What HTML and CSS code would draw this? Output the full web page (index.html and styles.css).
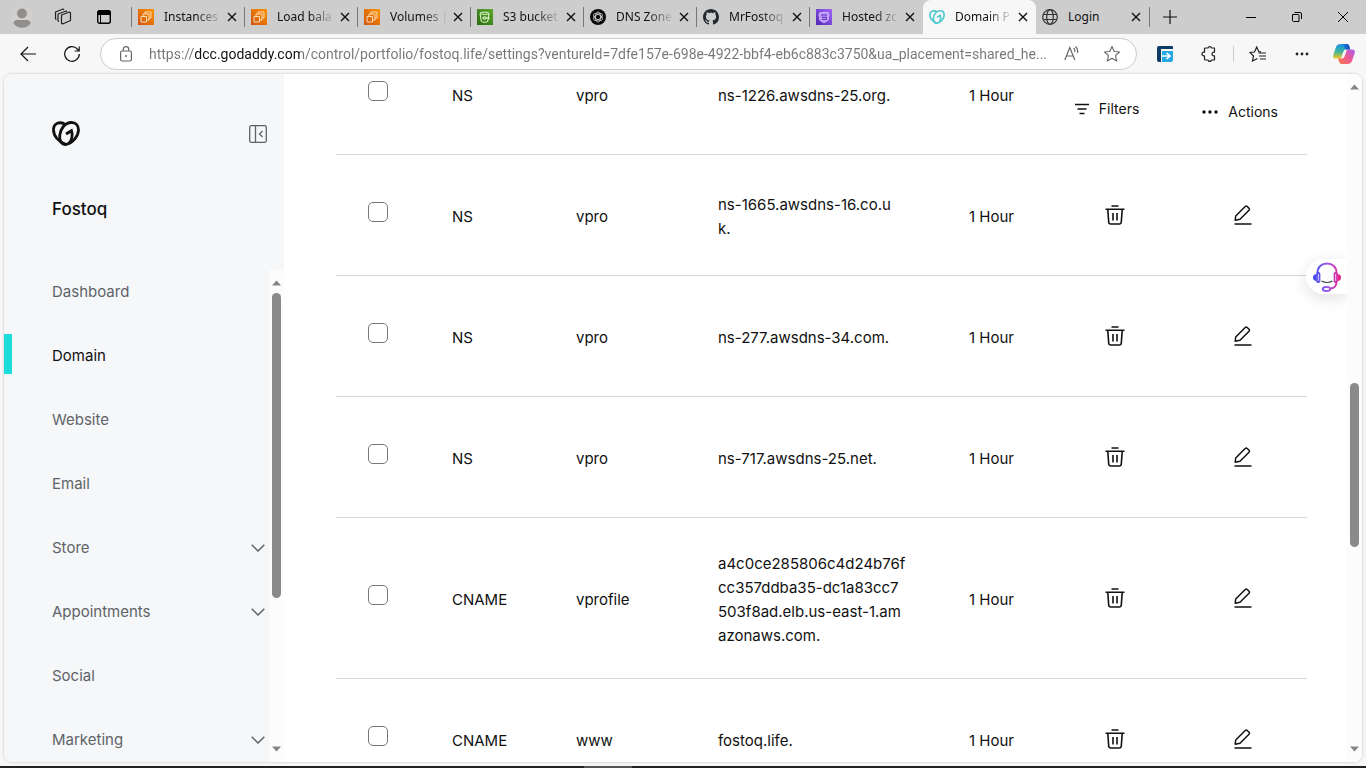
FILE: index.html
```html
<!DOCTYPE html>
<html lang="en">
<head>
<meta charset="utf-8">
<title>Domain Portfolio</title>
<link rel="stylesheet" href="styles.css">
</head>
<body>
<svg class="defs" aria-hidden="true">
  <defs>
    <linearGradient id="orange" x1="0" y1="1" x2="1" y2="0"><stop offset="0" stop-color="#cf5411"/><stop offset="1" stop-color="#fb9200"/></linearGradient>
    <linearGradient id="green" x1="0" y1="1" x2="1" y2="0"><stop offset="0" stop-color="#2a6a13"/><stop offset="1" stop-color="#5fa82c"/></linearGradient>
    <linearGradient id="purple" x1="0" y1="1" x2="1" y2="0"><stop offset="0" stop-color="#5029b5"/><stop offset="1" stop-color="#a264fa"/></linearGradient>
    <linearGradient id="headset" gradientUnits="userSpaceOnUse" x1="2" y1="0" x2="28" y2="0"><stop offset="0" stop-color="#3f4cf0"/><stop offset=".5" stop-color="#9a5cf0"/><stop offset="1" stop-color="#e8208a"/></linearGradient>
    <linearGradient id="cp1" x1="0" y1="0" x2="0" y2="1"><stop offset="0" stop-color="#1a8fe8"/><stop offset=".5" stop-color="#35b5a0"/><stop offset="1" stop-color="#f5c522"/></linearGradient>
    <linearGradient id="cp2" x1="1" y1="0" x2="0" y2="1"><stop offset="0" stop-color="#a85cf0"/><stop offset=".5" stop-color="#ee5a90"/><stop offset="1" stop-color="#fb7a42"/></linearGradient>
    <linearGradient id="cp3" x1="0" y1="0" x2="1" y2="0"><stop offset="0" stop-color="#1e7fe6"/><stop offset="1" stop-color="#1646b8"/></linearGradient>
  </defs>
  <symbol id="i-close" viewBox="0 0 10 10"><path d="M1 1l8 8M9 1l-8 8" fill="none" stroke="currentColor" stroke-width="1.4"/></symbol>
  <symbol id="i-ec2" viewBox="0 0 16 16"><rect width="16" height="16" fill="url(#orange)"/><path d="M7 5V3h6v6h-2M5 7V5h6v6H9M3 7.500h5.500V13H3z" fill="none" stroke="#ffe6c8" stroke-width=".9" stroke-linejoin="round"/></symbol>
  <symbol id="i-s3" viewBox="0 0 16 16"><rect width="16" height="16" fill="url(#green)"/><path d="M3 4.500l1.300 8c1.500 1 5 1 6.400 0L12 4.500M3 4.300c1-1.500 8-1.500 9 0-1 1.400-8 1.400-9 0zM6 8h3v2H6zM9 8.500l4 1" fill="none" stroke="#e6ffd2" stroke-width="1"/></symbol>
  <symbol id="i-gpt" viewBox="0 0 16 16"><circle cx="8" cy="8" r="8" fill="#0a0a0a"/><g fill="none" stroke="#ddd" stroke-width=".8"><ellipse cx="8" cy="8" rx="2.500" ry="5"/><ellipse cx="8" cy="8" rx="2.500" ry="5" transform="rotate(60 8 8)"/><ellipse cx="8" cy="8" rx="2.500" ry="5" transform="rotate(120 8 8)"/></g></symbol>
  <symbol id="i-github" viewBox="0 0 16 16"><path fill="#24292f" d="M8 0C3.580 0 0 3.580 0 8c0 3.540 2.290 6.530 5.470 7.590.4.070.55-.17.55-.38 0-.19-.01-.82-.01-1.490-2.010.37-2.530-.49-2.690-.94-.09-.23-.48-.94-.82-1.130-.28-.15-.68-.52-.01-.53.63-.01 1.080.58 1.230.82.72 1.210 1.870.87 2.330.66.07-.52.28-.87.51-1.070-1.780-.2-3.640-.89-3.640-3.950 0-.87.31-1.590.82-2.150-.08-.2-.36-1.020.08-2.120 0 0 .67-.21 2.200.82.64-.18 1.320-.27 2-.27s1.360.09 2 .27c1.530-1.040 2.200-.82 2.200-.82.44 1.100.16 1.920.08 2.120.51.56.82 1.270.82 2.150 0 3.070-1.870 3.750-3.650 3.950.29.25.54.73.54 1.480 0 1.070-.01 1.930-.01 2.200 0 .21.15.46.55.38A8.010 8.010 0 0 0 16 8c0-4.420-3.580-8-8-8z"/></symbol>
  <symbol id="i-route" viewBox="0 0 16 16"><rect width="16" height="16" fill="url(#purple)"/><path d="M4 3.500l2 .5 2-1 2 1 2-.5 1 2.500-.8 2 .3 2.500-2 2L8 13.500 5.500 12.500l-2-2L3.800 8 3 6z" fill="#b992fb" stroke="#dcc8ff" stroke-width=".9"/><path d="M5 6h6M6 8.300h4.500v2H6" fill="none" stroke="#6232c0" stroke-width="1"/></symbol>
  <symbol id="i-gd" viewBox="0 0 28 25"><g fill="none" stroke="currentColor" stroke-width="2.800"><path d="M14 23.500C6.500 21 1.300 14.500 1.500 8.500 1.700 2.500 7.500-.5 14 3.800"/><path d="M14 23.500c-4.500 0-6.700-4-6.300-9C8.200 8.500 12.500 1.500 19.500 1.500c4.500 0 7 3.300 7 7.300 0 6.200-5.500 13.200-12.500 14.700z"/><path d="M14 13l5.500-3.300c1.200 3.500.8 9.500-2.500 12.500"/></g></symbol>
  <symbol id="i-globe" viewBox="0 0 16 16"><g fill="none" stroke="#333" stroke-width="1.200"><circle cx="8" cy="8" r="7.300"/><ellipse cx="8" cy="8" rx="3.300" ry="7.300"/><path d="M1.500 5.500h13M1.500 10.500h13"/></g></symbol>
  <symbol id="i-trash" viewBox="0 0 20 20"><path d="M6.500 1h7M.5 4.200h19M2.800 4.500l.9 12.500q.2 2 2 2h8.600q1.800 0 2-2l.9-12.500M8 8v7.500M12 8v7.500" fill="none" stroke="currentColor" stroke-width="1.600"/></symbol>
  <symbol id="i-edit" viewBox="0 0 20 20"><path d="M2.200 15.200l.5-4.200L12.200 1.500q1-.8 2 0l1.800 1.800q.9 1 0 2L7 14.200zM1.500 19h17" fill="none" stroke="currentColor" stroke-width="1.500" stroke-linejoin="round"/></symbol>
  <symbol id="i-down" viewBox="0 0 14 8"><path d="M.7.700L7 7 13.300.7" fill="none" stroke="currentColor" stroke-width="1.500"/></symbol>
  <symbol id="i-arrow" viewBox="0 0 9 6"><path d="M0 5.500L4.500.500 9 5.500z" fill="#858585"/></symbol>
  <symbol id="i-star" viewBox="0 0 18 18"><path d="M9 1.500l2.200 5 5.300.500-4 3.600 1.200 5.400L9 13.200 4.300 16l1.200-5.400-4-3.600 5.300-.5z" fill="none" stroke="currentColor" stroke-width="1.100" stroke-linejoin="round"/></symbol>
</svg>

<header class="tabstrip">
  <div class="strip-tools">
    <button class="avatar" aria-label="Profile"><svg width="22" height="22" viewBox="0 0 22 22"><circle cx="11" cy="11" r="10.500" fill="#d2d0ce"/><circle cx="11" cy="7.500" r="5" fill="#918f8d"/><path d="M2.500 17.500q0-3.500 3.500-3.500h10q3.500 0 3.500 3.500a10.500 10.500 0 0 1-17 0z" fill="#918f8d"/></svg></button>
    <button aria-label="Workspaces"><svg width="18" height="18" viewBox="0 0 18 18"><g fill="none" stroke="#222" stroke-width="1.200" stroke-linejoin="round"><path d="M7.500 7l8-3 1 1v7.500l-8 3.500-1-1zM5 13.500l-1-.5V6l8-3 1 .8M2.500 11.500l-1-.5V4l7.500-3 1 .7"/></g></svg></button>
    <button aria-label="Tab actions"><svg width="14" height="14" viewBox="0 0 14 14"><rect x=".7" y=".7" width="12.600" height="12.600" rx="2" fill="none" stroke="#000" stroke-width="1.400"/><path d="M1 1h12v3.500H1zM3.500 4v9" stroke="#000" fill="#000"/></svg></button>
  </div>
  <nav class="tabs" aria-label="Tabs">
    <div class="tab"><svg class="fav"><use href="#i-ec2"/></svg><span class="title">Instances</span><button aria-label="Close tab"><svg class="x"><use href="#i-close"/></svg></button></div>
    <div class="tab"><svg class="fav"><use href="#i-ec2"/></svg><span class="title">Load bala</span><button aria-label="Close tab"><svg class="x"><use href="#i-close"/></svg></button></div>
    <div class="tab"><svg class="fav"><use href="#i-ec2"/></svg><span class="title">Volumes |</span><button aria-label="Close tab"><svg class="x"><use href="#i-close"/></svg></button></div>
    <div class="tab"><svg class="fav"><use href="#i-s3"/></svg><span class="title">S3 bucket</span><button aria-label="Close tab"><svg class="x"><use href="#i-close"/></svg></button></div>
    <div class="tab"><svg class="fav"><use href="#i-gpt"/></svg><span class="title">DNS Zone</span><button aria-label="Close tab"><svg class="x"><use href="#i-close"/></svg></button></div>
    <div class="tab"><svg class="fav"><use href="#i-github"/></svg><span class="title">MrFostoq</span><button aria-label="Close tab"><svg class="x"><use href="#i-close"/></svg></button></div>
    <div class="tab"><svg class="fav"><use href="#i-route"/></svg><span class="title">Hosted zc</span><button aria-label="Close tab"><svg class="x"><use href="#i-close"/></svg></button></div>
    <div class="tab active"><svg class="fav teal"><use href="#i-gd"/></svg><span class="title">Domain P</span><button aria-label="Close tab"><svg class="x"><use href="#i-close"/></svg></button></div>
    <div class="tab after"><svg class="fav"><use href="#i-globe"/></svg><span class="title">Login</span><button aria-label="Close tab"><svg class="x"><use href="#i-close"/></svg></button></div>
    <button class="newtab" aria-label="New tab"><svg width="14" height="14" viewBox="0 0 14 14"><path d="M7 0v14M0 7h14" stroke="#111" stroke-width="1.200"/></svg></button>
  </nav>
  <div class="window">
    <button aria-label="Minimize"><svg width="10" height="10"><path d="M0 5.500h10" stroke="#000"/></svg></button>
    <button aria-label="Restore"><svg width="10" height="10" viewBox="0 0 10 10"><path d="M.5 2.500h5.500q1 0 1 1v6H1.500q-1 0-1-1zM2.500.5H8q1.500 0 1.500 1.500v5" fill="none" stroke="#000"/></svg></button>
    <button aria-label="Close"><svg width="10" height="10"><path d="M0 0l10 10M10 0L0 10" stroke="#000"/></svg></button>
  </div>
</header>

<div class="toolbar">
  <button class="tool" aria-label="Back"><svg width="16" height="16" viewBox="0 0 16 16"><path d="M16 8H1M8 1L1 8l7 7" fill="none" stroke="#111" stroke-width="1.200"/></svg></button>
  <button class="tool" aria-label="Refresh"><svg width="16" height="16" viewBox="0 0 16 16"><path d="M15.300 8A7.300 7.300 0 1 1 13.500 3.200L15 5M15.200.5V5h-4.500" fill="none" stroke="#111" stroke-width="1.200"/></svg></button>
  <div class="address">
    <svg width="12" height="16" viewBox="0 0 12 16"><path d="M.6 6.500q0-1.500 1.500-1.500h7.800q1.500 0 1.500 1.500v7q0 1.500-1.500 1.500H2.100Q.6 15 .6 13.500zM3.200 5V3.500a2.800 2.800 0 0 1 5.600 0V5" fill="none" stroke="#666" stroke-width="1.200"/><circle cx="6" cy="10" r="1" fill="#666"/></svg>
    <input class="url" type="text" aria-label="Address" value="https://dcc.godaddy.com/control/portfolio/fostoq.life/settings?ventureId=7dfe157e-698e-4922-bbf4-eb6c883c3750&amp;ua_placement=shared_he...">
    <button class="tool" aria-label="Read aloud"><svg width="16" height="16" viewBox="0 0 16 16"><path d="M.8 14L5.800 1.500 10.800 14M2.500 10h6.600M9.500 2q1.800 1.500 1.200 4M11.500.5q3 2.500 2 6.500" fill="none" stroke="#666" stroke-width="1.200"/></svg></button>
    <button class="tool gray" aria-label="Favorite"><svg width="18" height="18"><use href="#i-star"/></svg></button>
  </div>
  <button class="tool" aria-label="Extension"><svg width="16" height="16" viewBox="0 0 16 16"><path d="M2 0h13q1 0 1 1v2H4v13H2q-2 0-2-2V2q0-2 2-2z" fill="#0d3b66"/><path d="M5 5h11v9q0 2-2 2H5z" fill="#27a9e6"/><path d="M5 10h7M9.500 7l3.500 3-3.500 3" fill="none" stroke="#fff" stroke-width="1.600"/></svg></button>
  <button class="tool" aria-label="Extensions"><svg width="16" height="16" viewBox="0 0 16 16"><path d="M5 2h2a1.800 1.800 0 0 1 3.500 0h3v4.200a1.900 1.900 0 1 0 0 3.600V14h-3a1.800 1.800 0 0 1-3.500 0H4.500q-1 0-1-1V9.800a1.900 1.900 0 1 1 0-3.600V3q0-1 1-1z" fill="none" stroke="#222" stroke-width="1.200" stroke-linejoin="round"/></svg></button>
  <span class="divider"></span>
  <button class="tool" aria-label="Favorites"><svg width="18" height="16" viewBox="0 0 18 16"><path d="M8.500 12.500L3.500 15l1-5L1 6.500 5.500 6l2.200-5 2 4.500 2.300.5M9.500 7H17M10 10h7M11 13h6" fill="none" stroke="#222" stroke-width="1.200"/></svg></button>
  <button class="tool" aria-label="Settings and more"><svg width="14" height="4"><g fill="#222"><circle cx="2" cy="2" r="1.400"/><circle cx="7" cy="2" r="1.400"/><circle cx="12" cy="2" r="1.400"/></g></svg></button>
  <button class="tool copilot" aria-label="Copilot"><svg width="22" height="20" viewBox="0 0 22 20"><path d="M8 0h6q1.500 0 2.200 2l1 3.500H13q-2 0-2.700 2.200L8 14.500H3Q-.5 14.500.3 11L3 3q1-3 5-3z" fill="url(#cp1)"/><path d="M10 0h4q1.500 0 2.200 2l1 3.500H13q-1.500-1-3-5.500z" fill="url(#cp3)"/><path d="M14 20H8.500Q7 20 6.200 18L5 14.500h4q2 0 2.700-2.200L14 5.500h5q3.500 0 2.700 3.500L19 17q-1 3-5 3z" fill="url(#cp2)"/></svg></button>
</div>

<div class="frame">
  <aside class="sidebar">
    <div class="brand">
      <svg class="logo" width="28" height="25"><use href="#i-gd"/></svg>
      <button aria-label="Collapse menu"><svg width="18" height="18" viewBox="0 0 18 18"><g fill="none" stroke="#5c6068" stroke-width="1.300"><rect x=".7" y=".7" width="16.600" height="16.600" rx="1.500"/><path d="M6.500 1v16M13.500 6l-3 3 3 3"/></g></svg></button>
    </div>
    <h1 class="venture">Fostoq</h1>
    <div class="menu-pane">
      <nav class="menu" aria-label="Main">
        <a href="#">Dashboard</a>
        <a href="#" class="current">Domain</a>
        <a href="#">Website</a>
        <a href="#">Email</a>
        <a href="#">Store<svg class="chev"><use href="#i-down"/></svg></a>
        <a href="#">Appointments<svg class="chev"><use href="#i-down"/></svg></a>
        <a href="#">Social</a>
        <a href="#">Marketing<svg class="chev"><use href="#i-down"/></svg></a>
      </nav>
      <div class="scroll menu-scroll"><svg class="arrow"><use href="#i-arrow"/></svg><div class="track"><span class="thumb"></span></div><svg class="arrow flip"><use href="#i-arrow"/></svg></div>
    </div>
  </aside>
  <main class="content">
    <table class="records">
      <colgroup><col class="c-check"><col class="c-type"><col class="c-name"><col class="c-data"><col class="c-ttl"><col class="c-act"><col class="c-act"></colgroup>
      <tbody>
        <tr><td><input type="checkbox" aria-label="Select ns-1226"></td><td>NS</td><td>vpro</td><td>ns-1226.awsdns-25.org.</td><td>1 Hour</td><td></td><td></td></tr>
        <tr><td><input type="checkbox" aria-label="Select ns-1665"></td><td>NS</td><td>vpro</td><td>ns-1665.awsdns-16.co.u<br>k.</td><td>1 Hour</td><td class="act"><button aria-label="Delete"><svg><use href="#i-trash"/></svg></button></td><td class="act"><button aria-label="Edit"><svg><use href="#i-edit"/></svg></button></td></tr>
        <tr><td><input type="checkbox" aria-label="Select ns-277"></td><td>NS</td><td>vpro</td><td>ns-277.awsdns-34.com.</td><td>1 Hour</td><td class="act"><button aria-label="Delete"><svg><use href="#i-trash"/></svg></button></td><td class="act"><button aria-label="Edit"><svg><use href="#i-edit"/></svg></button></td></tr>
        <tr><td><input type="checkbox" aria-label="Select ns-717"></td><td>NS</td><td>vpro</td><td>ns-717.awsdns-25.net.</td><td>1 Hour</td><td class="act"><button aria-label="Delete"><svg><use href="#i-trash"/></svg></button></td><td class="act"><button aria-label="Edit"><svg><use href="#i-edit"/></svg></button></td></tr>
        <tr><td><input type="checkbox" aria-label="Select vprofile"></td><td>CNAME</td><td>vprofile</td><td>a4c0ce285806c4d24b76f<br>cc357ddba35-dc1a83cc7<br>503f8ad.elb.us-east-1.am<br>azonaws.com.</td><td>1 Hour</td><td class="act"><button aria-label="Delete"><svg><use href="#i-trash"/></svg></button></td><td class="act"><button aria-label="Edit"><svg><use href="#i-edit"/></svg></button></td></tr>
        <tr><td><input type="checkbox" aria-label="Select www"></td><td>CNAME</td><td>www</td><td>fostoq.life.</td><td>1 Hour</td><td class="act"><button aria-label="Delete"><svg><use href="#i-trash"/></svg></button></td><td class="act"><button aria-label="Edit"><svg><use href="#i-edit"/></svg></button></td></tr>
      </tbody>
    </table>
    <div class="table-tools">
      <button class="filters"><svg width="14" height="12" viewBox="0 0 14 12"><path d="M0 1.500h14M2.500 6h9M4.500 10.500h5" stroke="#111" stroke-width="1.400"/></svg>Filters</button>
      <button class="actions"><svg width="16" height="4"><g fill="#111"><circle cx="2" cy="2" r="1.700"/><circle cx="8" cy="2" r="1.700"/><circle cx="14" cy="2" r="1.700"/></g></svg>Actions</button>
    </div>
    <button class="help" aria-label="Help"><svg width="30" height="32" viewBox="0 0 30 32"><g fill="none" stroke="url(#headset)" stroke-width="1.800"><path d="M5.500 12C5.500 6 9.500 2.500 15 2.500S24.500 6 24.500 12M24.500 21c0 4-1.500 6-6 6.500"/><ellipse cx="14.500" cy="28" rx="3.800" ry="2"/><rect x="5" y="12" width="2.500" height="9" rx="1"/><rect x="22.500" y="12" width="2.500" height="9" rx="1"/></g><path d="M4 13v7q-3-.5-3-3.500t3-3.500z" fill="#4a4cf0"/><path d="M26 13v7q3-.5 3-3.500t-3-3.500z" fill="#e8208a"/><path d="M9.500 20q5.500 3 11 0" fill="none" stroke="#444" stroke-width="1.200"/></svg></button>
  </main>
  <div class="scroll page-scroll"><svg class="arrow"><use href="#i-arrow"/></svg><div class="track"><span class="thumb"></span></div><svg class="arrow flip"><use href="#i-arrow"/></svg></div>
</div>
<footer class="taskbar"><span></span></footer>
</body>
</html>
```
FILE: styles.css
```css
* { box-sizing: border-box; }
body {
  margin: 0;
  height: 100vh;
  display: flex;
  flex-direction: column;
  overflow: hidden;
  background: #f7f7f7;
  color: #111;
  font: 15px/24px Inter, "Liberation Sans", sans-serif;
}
button { border: 0; padding: 0; margin: 0; background: none; color: inherit; font: inherit; display: flex; align-items: center; justify-content: center; }
svg { display: block; flex: none; }
.defs { position: absolute; width: 0; height: 0; }

/* tab strip */
.tabstrip { flex: none; height: 34px; display: flex; background: #cdcdcd; font: 12px/16px "Noto Sans", sans-serif; }
.strip-tools { flex: none; width: 132px; display: flex; align-items: center; padding-left: 1px; }
.strip-tools button { width: 41px; }
.tabs { flex: 1; min-width: 0; display: flex; }
.tab { flex: 0 1 113px; min-width: 0; display: flex; align-items: center; padding: 0 5px 0 6px; position: relative; }
.tab::before { content: ""; position: absolute; left: -1px; top: 7px; width: 1px; height: 20px; background: #777; }
.fav { width: 16px; height: 16px; }
.teal { color: #4cc8ce; }
.title { flex: 1; min-width: 0; margin-left: 10px; overflow: hidden; white-space: nowrap; mask-image: linear-gradient(90deg, #000 32px, transparent 58px); }
.after .title { mask-image: none; }
.tab button { width: 16px; height: 16px; margin-left: 2px; }
.x { width: 10px; height: 10px; }
.active { background: #f7f7f7; border-radius: 8px 8px 0 0; }
.active::before, .after::before { display: none; }
.newtab { width: 42px; background: linear-gradient(#777, #777) 0 7px / 1px 20px no-repeat; }
.window { flex: none; display: flex; }
.window button { width: 46px; }

/* toolbar */
.toolbar { flex: none; height: 40px; display: flex; align-items: center; padding: 0 8px 0 6px; }
.tool { width: 44px; height: 32px; flex: none; }
.address { flex: 1; min-width: 0; height: 32px; margin: 0 6px; display: flex; align-items: center; padding: 0 4px 0 19px; border: 1px solid #ccc; border-radius: 16px; background: #fff; }
.url {
  flex: 1; min-width: 0; margin-left: 17px; padding: 0; border: 0; outline: 0; height: 24px;
  font: 14px/24px Roboto, "Noto Sans", sans-serif;
  color: transparent;
  background: linear-gradient(90deg, #767676 46px, #111 46px, #111 151px, #767676 151px);
  background-clip: text;
  -webkit-background-clip: text;
}
.address .tool { width: 40px; }
.gray { color: #666; }
.divider { width: 1px; height: 16px; background: #ccc; margin: 0 2px; }
.copilot { width: 34px; margin: 0 -3px 0 3px; }

/* page frame */
.frame { flex: 1; min-height: 0; margin: 0 4px 4px; display: flex; background: #fff; border-radius: 8px; overflow: hidden; box-shadow: 0 0 2px 1px #ddd; }
.sidebar { flex: none; width: 280px; display: flex; flex-direction: column; background: #f5f7f9; }
.brand { display: flex; align-items: center; justify-content: space-between; padding: 47px 17px 0 48px; }
.venture { margin: 50px 48px 49px; font-size: 17px; line-height: 26px; font-weight: 500; }
.brand + .venture { margin-bottom: 48px; }
.menu-pane { flex: 1; min-height: 0; display: flex; }
.menu { flex: 1; display: flex; flex-direction: column; gap: 24px; overflow: hidden; }
.menu a { flex: none; height: 40px; display: flex; align-items: center; justify-content: space-between; padding: 4px 4px 0 48px; color: #5f6368; text-decoration: none; }
.menu .current { color: #111; border-left: 8px solid #1bdbdb; padding-left: 40px; }
.chev { width: 14px; height: 8px; }

/* scroll bars */
.scroll { flex: none; width: 15px; display: flex; flex-direction: column; align-items: center; padding: 10px 0; background: #fcfcfc; }
.arrow { width: 9px; height: 6px; }
.flip { transform: rotate(180deg); }
.track { flex: 1; display: flex; flex-direction: column; margin: 7px 0; }
.track::before, .track::after { content: ""; flex: 290; }
.track .thumb { flex: 166; width: 9px; border-radius: 5px; background: #8a8a8a; }
.track::after { flex-grow: 194; }
.menu-scroll .track::before { flex-grow: 0; }
.menu-scroll .track .thumb { flex-grow: 307; }
.menu-scroll .track::after { flex-grow: 142; }

/* records */
.content { flex: 1; min-width: 0; position: relative; overflow: hidden; padding: 0 40px 0 52px; }
.records { width: 100%; margin-top: -40px; table-layout: fixed; border-collapse: separate; border-spacing: 0; }
.c-check { width: 100px; }
.c-type { width: 124px; }
.c-name { width: 142px; }
.c-data { width: 251px; }
.c-ttl { width: 98px; }
.c-act { width: 128px; }
.records td { height: 121px; padding: 34px 0 30px 16px; border-bottom: 1px solid #d4dbe0; white-space: nowrap; }
.records td:first-child { padding: 24px 0 30px 32px; }
.records td.act { padding: 32px 0; }
.act button { width: 40px; height: 24px; margin: 0 auto; }
.act svg { width: 20px; height: 20px; }
.records input { display: block; appearance: none; width: 20px; height: 20px; margin: 0; border: 1px solid #767676; border-radius: 5px; background: #fff; }

.table-tools { position: absolute; top: 23px; right: 69px; display: flex; align-items: flex-start; gap: 63px; font-size: 14px; }
.table-tools button { gap: 10px; }
.actions { margin-top: 3px; }
.help { position: absolute; top: 185px; right: 0; width: 41px; height: 35px; border-radius: 18px 0 0 18px; background: #fff; box-shadow: 0 4px 16px rgba(0, 0, 0, .12); }

.taskbar { flex: none; height: 2px; background: #222; display: flex; }
.taskbar span { width: 48px; margin-left: 584px; background: #555; }
```
